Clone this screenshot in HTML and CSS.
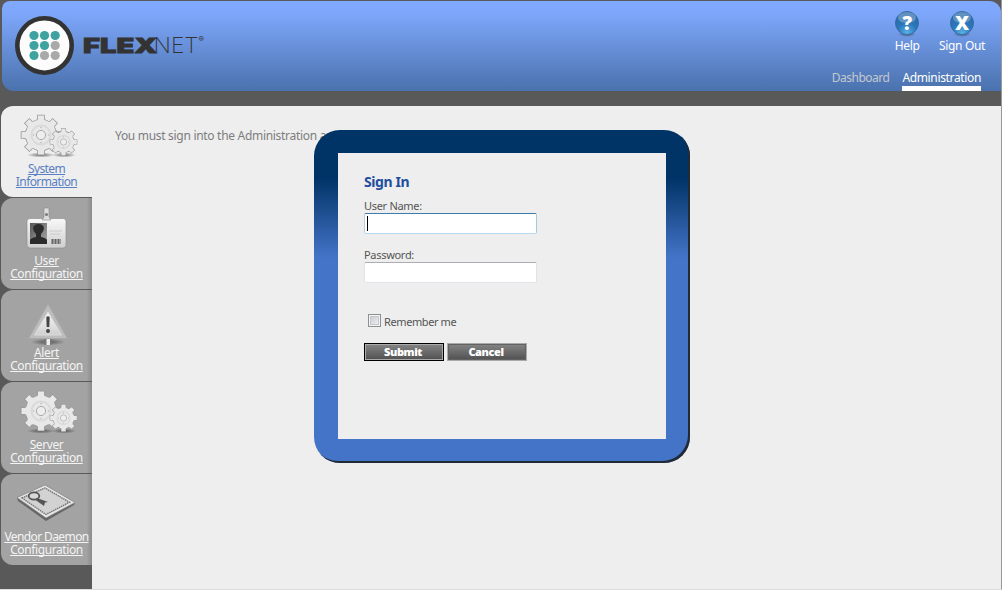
FILE: index.html
```html
<!DOCTYPE html>
<html lang="en">
<head>
    <meta charset="UTF-8">
    <title>FlexNet - Administration</title>
    <link rel="stylesheet" href="styles.css">
</head>
<body>
    <!-- shared gradients and gear shapes -->
    <svg class="defs" width="0" height="0">
        <defs>
            <linearGradient id="silver" x1="0" y1="0" x2="0" y2="1">
                <stop offset="0" stop-color="#f8f8f8"/>
                <stop offset="1" stop-color="#cfcfcf"/>
            </linearGradient>
            <linearGradient id="photo" x1="0" y1="0" x2="1" y2="1">
                <stop offset="0" stop-color="#555"/>
                <stop offset="1" stop-color="#aaa"/>
            </linearGradient>
            <radialGradient id="shade">
                <stop offset="0" stop-color="#333" stop-opacity=".7"/>
                <stop offset="1" stop-color="#333" stop-opacity="0"/>
            </radialGradient>
            <radialGradient id="ball" cx=".5" cy=".95" r=".9">
                <stop offset="0" stop-color="#5cb4e8"/>
                <stop offset=".5" stop-color="#2b76b8"/>
                <stop offset="1" stop-color="#2e6aa8"/>
            </radialGradient>
            <path id="tooth" d="M-4.5-14 L-3-16 L-3-19.5 L3-19.5 L3-16 L4.5-14Z"/>
            <g id="cog">
                <circle r="15.2"/>
                <use href="#tooth"/>
                <use href="#tooth" transform="rotate(45)"/>
                <use href="#tooth" transform="rotate(90)"/>
                <use href="#tooth" transform="rotate(135)"/>
                <use href="#tooth" transform="rotate(180)"/>
                <use href="#tooth" transform="rotate(225)"/>
                <use href="#tooth" transform="rotate(270)"/>
                <use href="#tooth" transform="rotate(315)"/>
            </g>
            <g id="gear">
                <use href="#cog" class="gear-edge"/>
                <use href="#cog" class="gear-body"/>
                <circle r="9.5" fill="none" stroke="#dadada" stroke-width="2"/>
                <circle r="4.6" class="gear-hole"/>
                <g fill="#bbb">
                    <circle cx="0" cy="-7.5" r=".8"/>
                    <circle cx="0" cy="7.5" r=".8"/>
                    <circle cx="-7.5" cy="0" r=".8"/>
                    <circle cx="7.5" cy="0" r=".8"/>
                </g>
            </g>
            <g id="gears">
                <ellipse cx="21" cy="41" rx="14" ry="2.5" fill="url(#shade)"/>
                <ellipse cx="44" cy="41" rx="12" ry="2.5" fill="url(#shade)"/>
                <use href="#gear" transform="translate(21 21)"/>
                <use href="#gear" transform="translate(43.5 28) scale(.68)"/>
            </g>
        </defs>
    </svg>

    <div class="header">
        <div class="logo">
            <svg width="60" height="60" viewBox="0 0 60 60">
                <circle cx="29.5" cy="29.5" r="27.2" fill="#fcfcfc" stroke="#333" stroke-width="4.6"/>
                <g fill="#3ea2a0">
                    <circle cx="19" cy="19.5" r="4.6"/>
                    <circle cx="29.5" cy="19.5" r="4.6"/>
                    <circle cx="40.2" cy="19.5" r="4.6"/>
                    <circle cx="19" cy="29.5" r="4.6"/>
                    <circle cx="29.5" cy="29.5" r="4.6"/>
                    <circle cx="19" cy="39.5" r="4.6"/>
                </g>
                <g fill="#a9a9a9">
                    <circle cx="40.2" cy="29.5" r="4.6"/>
                    <circle cx="29.5" cy="39.5" r="4.6"/>
                    <circle cx="40.2" cy="39.5" r="4.6"/>
                </g>
            </svg>
            <svg class="wordmark" width="132" height="24" viewBox="0 0 132 24">
                <text x="3" y="19.5" class="flex-text" textLength="74" lengthAdjust="spacingAndGlyphs">FLEX</text>
                <text x="73.5" y="19.5" class="net-text" textLength="45" lengthAdjust="spacingAndGlyphs">NET</text>
                <text x="118.5" y="9" class="reg-text">®</text>
            </svg>
        </div>
        <div class="header-right">
            <div class="tools">
                <a class="tool help">
                    <svg width="26" height="27" viewBox="0 0 26 27">
                        <ellipse cx="13" cy="24" rx="9" ry="3" fill="url(#shade)"/>
                        <circle cx="13" cy="13" r="11.5" fill="url(#ball)" stroke="#2a66a0" stroke-width=".8"/>
                        <ellipse cx="13" cy="7.5" rx="9" ry="5.5" fill="#fff" opacity=".25"/>
                        <text x="13" y="19.5" class="glyph">?</text>
                    </svg>
                    <span>Help</span>
                </a>
                <a class="tool signout">
                    <svg width="26" height="27" viewBox="0 0 26 27">
                        <ellipse cx="13" cy="24" rx="9" ry="3" fill="url(#shade)"/>
                        <circle cx="13" cy="13" r="11.5" fill="url(#ball)" stroke="#2a66a0" stroke-width=".8"/>
                        <ellipse cx="13" cy="7.5" rx="9" ry="5.5" fill="#fff" opacity=".25"/>
                        <text x="13" y="19.5" class="glyph">X</text>
                    </svg>
                    <span>Sign Out</span>
                </a>
            </div>
            <div class="nav">
                <a class="dashboard">Dashboard</a>
                <a class="active">Administration</a>
            </div>
        </div>
    </div>

    <div class="wrapper">
        <div class="sidebar">
            <a class="tab selected">
                <svg width="60" height="48" viewBox="0 0 60 48"><use href="#gears"/></svg>
                <span>System</span>
                <span>Information</span>
            </a>
            <a class="tab">
                <svg width="60" height="48" viewBox="0 0 60 48">
                    <rect x="7" y="12.5" width="39" height="29.5" rx="3" fill="url(#silver)" stroke="#888" stroke-width=".6"/>
                    <path d="M24 2 h5 v9 l2 3 h-9 l2-3z" fill="#ddd" stroke="#888" stroke-width=".6"/>
                    <circle cx="26.5" cy="8.5" r="1.5" fill="#777"/>
                    <rect x="10" y="17" width="17" height="21" fill="url(#photo)"/>
                    <path d="M10 38 v-4 q1-2 6-3 v-3 q-3-3-3-6 q1-4 5.5-4 q4.5 0 5.5 4 q0 3-3 6 v3 q5 1 6 3 v4z" fill="#2b2b2b"/>
                    <path d="M29 25 h13 M30 28 h10" stroke="#ccc"/>
                    <rect x="31" y="33" width="10" height="5" fill="#999"/>
                    <path d="M32.5 33v5 M35.5 33v5 M38.5 33v5" stroke="#666"/>
                </svg>
                <span>User</span>
                <span>Configuration</span>
            </a>
            <a class="tab">
                <svg width="60" height="48" viewBox="0 0 60 48">
                    <ellipse cx="28" cy="44" rx="17" ry="3.5" fill="url(#shade)"/>
                    <rect x="24" y="40" width="8" height="7" rx="2" fill="#777"/>
                    <rect x="26.5" y="40" width="3.5" height="7" fill="#eee"/>
                    <path d="M28 6 L47.5 40.5 H8.5Z" fill="#bdbdbd" stroke="#a8a8a8" stroke-linejoin="round"/>
                    <path d="M28 14 L41.5 37 H14.5Z" fill="url(#silver)" stroke="#ddd" stroke-linejoin="round"/>
                    <path d="M26.3 19 q1.7-1.5 3.4 0 L29.3 29 h-2.6z" fill="#444"/>
                    <circle cx="28" cy="33" r="2" fill="#444"/>
                </svg>
                <span>Alert</span>
                <span>Configuration</span>
            </a>
            <a class="tab server">
                <svg width="60" height="48" viewBox="0 0 60 48"><use href="#gears"/></svg>
                <span>Server</span>
                <span>Configuration</span>
            </a>
            <a class="tab vendor">
                <svg width="60" height="48" viewBox="0 0 60 48">
                    <path d="M-3 16 L25 35 L55 21 L54 23 L26 39 L-2 19Z" fill="#666"/>
                    <path d="M-3 15.5 L25 3 L55 20.5 L26 36Z" fill="#e6e6e6" stroke="#777" stroke-width=".6"/>
                    <path d="M2 16 L25 6 L49.5 20.3 L26 32.5Z" fill="#d2d2d2" stroke="#777" stroke-width="1.5" stroke-dasharray="1.5 .7"/>
                    <ellipse cx="14" cy="14" rx="5.3" ry="3.6" fill="#d8d8d8" stroke="#555" stroke-width="1.8"/>
                    <path d="M17 16 L28 20 L25 20.5 L24 24 L15.5 18Z" fill="#555"/>
                </svg>
                <span>Vendor Daemon</span>
                <span>Configuration</span>
            </a>
        </div>

        <div class="content">
            <p class="message">You must sign into the Administration area.</p>
        </div>
    </div>

    <div class="dialog">
        <form class="login">
            <h1>Sign In</h1>
            <label class="username" for="user">User Name:</label>
            <div class="field focused">
                <input type="text" id="user">
                <span class="caret"></span>
            </div>
            <label class="pass" for="password">Password:</label>
            <div class="field">
                <input type="password" id="password">
            </div>
            <div class="remember">
                <input type="checkbox" id="remember">
                <label for="remember">Remember me</label>
            </div>
            <div class="buttons">
                <button type="button" class="submit">Submit</button>
                <button type="button">Cancel</button>
            </div>
        </form>
    </div>
</body>
</html>
```
FILE: styles.css
```css
body {
    margin: 0;
    box-sizing: border-box;
    width: 1002px;
    height: 590px;
    overflow: hidden;
    position: relative;
    border-right: 1px solid #999;
    border-bottom: 1px solid #ddd;
    background-color: #595959;
    font-family: "Noto Sans", "Open Sans", sans-serif;
    font-size: 12px;
    letter-spacing: -0.35px;
}

html {
    background-color: #595959;
}

.defs {
    position: absolute;
}

/* header */
.header {
    display: flex;
    justify-content: space-between;
    box-sizing: border-box;
    height: 91px;
    margin-left: 2px;
    border-top: 1px solid #595959;
    border-radius: 8px 12px 0 12px;
    background: linear-gradient(#80aaff 0%, #7da6fa 15%, #4a72ad 100%);
    color: white;
}

.logo {
    display: flex;
    padding: 15px 0 0 13px;
}

.wordmark {
    margin: 17px 0 0 5px;
}

.flex-text {
    font: 900 20px Inter, sans-serif;
    letter-spacing: 0;
    fill: #333;
    stroke: #333;
    stroke-width: 0.8px;
}

.net-text {
    font: 200 21px Inter, sans-serif;
    letter-spacing: 0;
    fill: #333;
}

.reg-text {
    font: 8px Inter, sans-serif;
    fill: #333;
}

.header-right {
    display: flex;
    flex-direction: column;
    align-items: flex-end;
}

.tools {
    display: flex;
    padding: 9px 16px 0 0;
    gap: 19px;
}

.tool {
    display: flex;
    flex-direction: column;
    align-items: center;
    line-height: 18px;
}

.glyph {
    font: 800 19px "Open Sans", "Noto Sans", sans-serif;
    fill: white;
    text-anchor: middle;
}

.nav {
    display: flex;
    gap: 13px;
    padding: 14px 20px 0 0;
    line-height: 17px;
}

.dashboard {
    color: #c4c8ce;
    letter-spacing: -0.5px;
}

.nav .active {
    border-bottom: 5px solid white;
}

/* page */
.wrapper {
    display: flex;
    height: 483px;
    margin-top: 15px;
}

.sidebar {
    display: flex;
    flex-direction: column;
    gap: 1px;
    width: 91px;
    padding-left: 1px;
}

.tab {
    display: flex;
    flex-direction: column;
    align-items: center;
    height: 91px;
    border-radius: 12px 0 0 12px;
    background: linear-gradient(to right, #a3a3a3 94%, #8b8b8b);
    color: #f4f4f4;
    text-align: center;
    text-decoration: underline;
    text-decoration-skip-ink: none;
    line-height: 13px;
    letter-spacing: -0.4px;
}

.tab svg {
    flex: none;
    margin: 8px 0 0 6px;
    overflow: visible;
}

.tab.selected {
    background: #eee;
    color: #5a7fc2;
    letter-spacing: -0.6px;
}

.tab span {
    white-space: nowrap;
}

.vendor span:first-of-type {
    letter-spacing: -0.6px;
}

.gear-edge {
    fill: #999;
    stroke: #999;
    stroke-width: 1.6px;
}

.gear-body {
    fill: #e8e8e8;
}

.gear-hole {
    fill: #eee;
    stroke: #aaa;
}

.server .gear-hole {
    fill: #999;
}

.content {
    flex: 1;
    background-color: #eee;
}

.message {
    margin: 22px 0 0 23px;
    line-height: 16px;
    letter-spacing: -0.3px;
    color: #7d7d7d;
}

/* sign in dialog */
.dialog {
    position: absolute;
    left: 314px;
    top: 130px;
    box-sizing: border-box;
    width: 376px;
    height: 333px;
    padding: 23px 24px 24px;
    border-radius: 26px;
    background: linear-gradient(#036 0, #036 48px, #4474c8 128px);
    box-shadow: inset -2px -2px 0 #222a35;
}

.login {
    box-sizing: border-box;
    height: 286px;
    padding: 19px 26px 0;
    background-color: #eee;
    font-size: 11px;
    letter-spacing: -0.3px;
    color: #555;
}

.login h1 {
    margin: 0;
    font-size: 14px;
    line-height: 20px;
    letter-spacing: -0.4px;
    color: #1f4e9e;
}

.login > label {
    display: block;
    line-height: 17px;
}

.login .username {
    margin-top: 5px;
}

.login .pass {
    margin-top: 12px;
}

.field {
    position: relative;
    width: 173px;
    height: 21px;
    margin-top: -1px;
}

.field input {
    box-sizing: border-box;
    display: block;
    width: 173px;
    height: 21px;
    border: 1px solid #e2e3ea;
    border-top-color: #abadb3;
    border-radius: 2px;
    background-color: white;
}

.field.focused input {
    border-color: #3d7bad #a4c9e3 #b7d9ed #b5cfe7;
}

.caret {
    position: absolute;
    left: 3px;
    top: 3px;
    width: 1px;
    height: 15px;
    background-color: black;
}

.remember {
    display: flex;
    align-items: center;
    gap: 3px;
    margin-top: 31px;
    padding-left: 4px;
    height: 16px;
    letter-spacing: -0.4px;
}

.remember label {
    margin-bottom: 2px;
}

.remember input {
    appearance: none;
    box-sizing: border-box;
    width: 13px;
    height: 13px;
    margin: 0 0 3px;
    border: 1px solid #8e8f8f;
    background: linear-gradient(135deg, #c0c4cc, #f6f6f6);
    box-shadow: inset 0 0 0 1px #f4f4f4, inset 0 0 0 2px #c4c8d0;
}

.buttons {
    display: flex;
    gap: 3px;
    margin-top: 13px;
}

.buttons button {
    width: 80px;
    height: 18px;
    padding: 0 2px 0 0;
    border: 1px solid #aaa;
    background: linear-gradient(#858585, #505050);
    box-shadow: inset 0 0 0 1px #626262;
    color: white;
    font: 800 11px/14px "Open Sans", "Noto Sans", sans-serif;
    letter-spacing: -0.4px;
}

.buttons .submit {
    border-color: black;
    box-shadow: inset 0 0 0 1px #aaa;
}
```
